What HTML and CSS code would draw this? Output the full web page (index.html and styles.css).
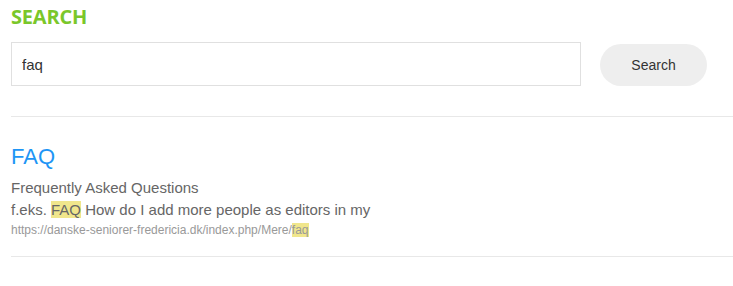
FILE: index.html
```html
<!DOCTYPE html>
<html>

<head>
    <title>Search</title>
    <meta name="viewport" content="width=device-width, initial-scale=1">
    <link rel="stylesheet" href="styles.css">
</head>

<body>
    <div class="search-page">
        <h2 class="search-title">SEARCH</h2>
        <form class="search-form" onsubmit="return false;">
            <input type="text" class="search-input" value="faq">
            <button class="btn-search">Search</button>
        </form>

        <div class="results">
            <div class="result">
                <a class="result-title" href="#">FAQ</a>
                <div class="result-desc">Frequently Asked Questions</div>
                <div class="result-text">f.eks. <span class="hl">FAQ</span> How do I add more people as editors in my</div>
                <div class="result-url">https://danske-seniorer-fredericia.dk/index.php/Mere/<span class="hl">faq</span></div>
            </div>
        </div>
    </div>
</body>

</html>
```

FILE: styles.css
```css
body {
    background: #fff;
    color: #333;
    font-family: "Liberation Sans", Arial, sans-serif;
    margin: 0;
    padding: 0 0 0 11px;
}

.search-title {
    color: #7ac72a;
    font-family: "Open Sans", sans-serif;
    font-weight: 700;
    font-size: 20px;
    line-height: 24px;
    letter-spacing: -0.2px;
    margin: 5px 0 13px;
}

.search-form {
    display: flex;
    align-items: center;
    gap: 19px;
    margin: 0;
}

.search-input {
    width: 570px;
    height: 44px;
    box-sizing: border-box;
    border: 1px solid #e0e0e0;
    padding: 0 10px;
    font-family: "Liberation Sans", Arial, sans-serif;
    font-size: 15px;
    color: #333;
    outline: none;
}

.btn-search {
    width: 107px;
    height: 42px;
    margin-top: 2px;
    background: #eeeeee;
    color: #333;
    border: none;
    border-radius: 21px;
    font-family: "Liberation Sans", Arial, sans-serif;
    font-size: 14px;
    cursor: pointer;
}

.results {
    margin-top: 30px;
    border-top: 1px solid #e8e8e8;
}

.result {
    padding: 27px 0 18px;
    border-bottom: 1px solid #e8e8e8;
}

.result-title {
    display: block;
    color: #1e95f5;
    font-size: 22px;
    line-height: 26px;
    text-decoration: none;
    margin-bottom: 7px;
}

.result-desc,
.result-text {
    color: #666;
    font-size: 15px;
    line-height: 22px;
}

.result-url {
    color: #999;
    font-size: 12px;
    line-height: 16px;
    margin-top: 1px;
}

.hl {
    background: #f0e68c;
}
```
